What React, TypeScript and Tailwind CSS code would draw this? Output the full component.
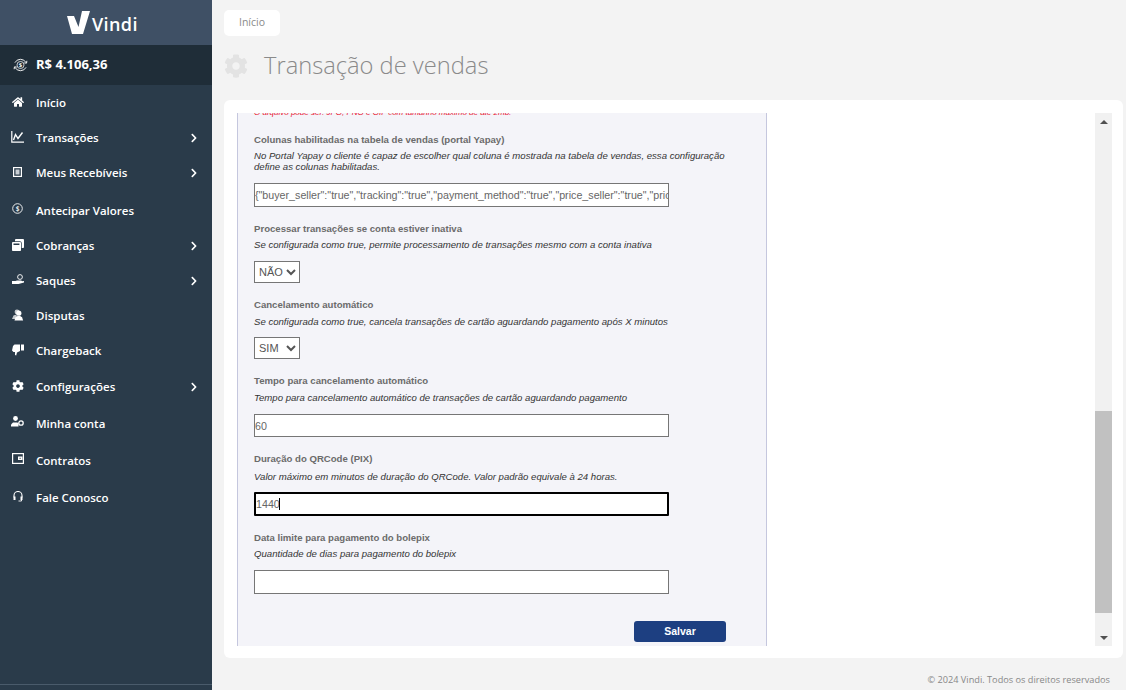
import type { ReactNode } from 'react';
import { FaHome, FaCog, FaChevronRight, FaWindowRestore } from 'react-icons/fa';

const openSans = 'font-["Open_Sans",sans-serif]';

function ChartIcon() {
  return (
    <svg width="13" height="12" viewBox="0 0 13 12" fill="none" stroke="white">
      <path d="M0.8 0v11.2H13" strokeWidth="1.2" />
      <path d="M2.5 9l2-5.5 2.5 4L11.5 1.5" strokeWidth="1.4" />
    </svg>
  );
}

function ReceiptIcon() {
  return (
    <svg width="9" height="10" viewBox="0 0 9 10" fill="none">
      <rect x="0.6" y="0.6" width="7.8" height="8.8" stroke="white" strokeWidth="1.2" />
      <rect x="2.5" y="2.5" width="4" height="5" fill="#c8ced4" />
    </svg>
  );
}

function DollarIcon() {
  return (
    <svg width="11" height="11" viewBox="0 0 11 11" fill="none">
      <circle cx="5.5" cy="5.5" r="4.8" stroke="white" strokeWidth="0.9" />
      <text x="5.5" y="8" textAnchor="middle" fontSize="6.5" fill="white" fontFamily="Open Sans">$</text>
    </svg>
  );
}

function WithdrawIcon() {
  return (
    <svg width="12" height="11" viewBox="0 0 12 11" fill="none">
      <circle cx="8" cy="3" r="2.4" stroke="white" strokeWidth="0.9" />
      <path d="M0 7h3.5l1.5-.6h4.5v1.2H7l5-.6v1.6L6.5 10H0z" fill="white" />
    </svg>
  );
}

function DisputeIcon() {
  return (
    <svg width="12" height="12" viewBox="0 0 12 12" fill="white">
      <circle cx="5" cy="3" r="2.4" opacity="0.75" />
      <path d="M0 10l1.5-3.5 2-.8 1.5 1-1 3.3z" opacity="0.75" />
      <circle cx="6.8" cy="4.2" r="2.6" />
      <path d="M2.5 11.5l1-3.2 2-1.3h2.600l2 1.300 1 3.200z" />
    </svg>
  );
}

function ThumbIcon() {
  return (
    <svg width="12" height="12" viewBox="0 0 12 12" fill="white">
      <path d="M2.5 0.5h5.5v6.5l-3 1.5-.8 3-1.200-.5V8H1.5L0 6.5 1 2z" />
      <rect x="9" y="0.5" width="3" height="6" />
    </svg>
  );
}

function AccountIcon() {
  return (
    <svg width="13" height="11" viewBox="0 0 13 11" fill="white">
      <circle cx="4.5" cy="2.5" r="2.4" />
      <path d="M0 10.5V8.5l2-2h4.500l1 1v3z" />
      <circle cx="10" cy="7" r="2.2" fill="none" stroke="white" strokeWidth="1.3" />
    </svg>
  );
}

function WalletIcon() {
  return (
    <svg width="12" height="11" viewBox="0 0 12 11" fill="none">
      <rect x="0.6" y="0.6" width="10.8" height="9.8" stroke="white" strokeWidth="1.2" />
      <rect x="6" y="3.5" width="4.5" height="3.5" fill="white" />
      <rect x="7.5" y="4.8" width="1.2" height="1" fill="#2a3b4a" />
    </svg>
  );
}

function HeadsetIcon() {
  return (
    <svg width="10" height="11" viewBox="0 0 10 11" fill="none">
      <path d="M1 6.5V4.5a4 4 0 0 1 8 0v2" stroke="white" strokeWidth="1.1" />
      <rect x="0.5" y="5.5" width="2" height="3.5" fill="white" />
      <rect x="7.5" y="5.5" width="2" height="3.5" fill="white" />
      <path d="M8.5 9v1H5.5" stroke="white" strokeWidth="0.9" />
    </svg>
  );
}

function BalanceIcon() {
  return (
    <svg width="17" height="14" viewBox="0 0 18 15" fill="none">
      <path d="M3 5A6.8 6.8 0 0 1 15 5" stroke="white" strokeWidth="1" />
      <path d="M15 10A6.8 6.8 0 0 1 3 10" stroke="white" strokeWidth="1" />
      <path d="M13 5.3l2.5.2.3-2.500M5 9.700L2.500 9.500 2.200 12" stroke="white" strokeWidth="1" />
      <circle cx="9" cy="7.5" r="3.8" stroke="white" strokeWidth="0.8" />
      <text x="9" y="10" textAnchor="middle" fontSize="6.5" fontWeight="700" fill="white" fontFamily="Open Sans">$</text>
    </svg>
  );
}

const menu: { label: string; icon: ReactNode; arrow?: boolean; extra?: string; lift?: string }[] = [
  { label: 'Início', icon: <FaHome size={12} />, lift: 'mb-[1px]' },
  { label: 'Transações', icon: <ChartIcon />, arrow: true },
  { label: 'Meus Recebíveis', icon: <ReceiptIcon />, arrow: true },
  { label: 'Antecipar Valores', icon: <DollarIcon />, extra: 'mt-[3px]', lift: 'mb-[4px]' },
  { label: 'Cobranças', icon: <FaWindowRestore size={12} />, arrow: true, lift: 'mb-[1px]' },
  { label: 'Saques', icon: <WithdrawIcon />, arrow: true },
  { label: 'Disputas', icon: <DisputeIcon /> },
  { label: 'Chargeback', icon: <ThumbIcon /> },
  { label: 'Configurações', icon: <FaCog size={12} />, arrow: true, extra: 'mt-[1px]' },
  { label: 'Minha conta', icon: <AccountIcon />, extra: 'mt-[2px]', lift: 'mb-[4px]' },
  { label: 'Contratos', icon: <WalletIcon />, extra: 'mt-[2px]', lift: 'mb-[4px]' },
  { label: 'Fale Conosco', icon: <HeadsetIcon />, extra: 'mt-[2px]', lift: 'mb-[3px]' },
];

function Sidebar() {
  return (
    <aside className={`flex h-full w-[212px] shrink-0 flex-col bg-[#2a3b4a] text-white ${openSans}`}>
      <div className="flex h-[45px] items-center bg-[#3f5065] pl-[66px]">
        <svg width="24" height="24" viewBox="0 0 24 24">
          <path d="M1 5h7l4.5 11L16 0h8l-7 23H6z" fill="white" />
        </svg>
        <span className="mt-[3px] ml-[2px] text-[18px] leading-none font-semibold tracking-[0.4px]">Vindi</span>
      </div>
      <div className="flex h-[40px] items-center bg-[#1f2d38] pl-[12px] text-[13px] font-bold">
        <BalanceIcon />
        <span className="ml-[7px]">R$ 4.106,36</span>
      </div>
      <nav className="flex flex-col">
        {menu.map((item) => (
          <div key={item.label} className={`flex h-[35px] items-center text-[11.5px] font-semibold ${item.extra ?? ''}`}>
            <span className={`flex w-[36px] justify-center pr-[1px] ${item.lift ?? 'mb-[2px]'}`}>{item.icon}</span>
            <span>{item.label}</span>
            {item.arrow && <FaChevronRight size={10} className="mr-[13px] ml-auto" />}
          </div>
        ))}
      </nav>
      <div className="mt-auto mb-[5px] h-px bg-[#4a5b6b]" />
    </aside>
  );
}

function Field({
  title,
  hint,
  className,
  hintClass,
  children,
}: {
  title: string;
  hint: ReactNode;
  className: string;
  hintClass: string;
  children: ReactNode;
}) {
  return (
    <div className={className}>
      <p className="text-[9.6px] leading-[14px] font-bold text-[#6b6b6b]">{title}</p>
      <p className={`text-[9.6px] leading-[11px] text-[#333333] italic ${hintClass}`}>{hint}</p>
      {children}
    </div>
  );
}

function Form() {
  const inputClass = 'block w-[415px] border border-[#767676] bg-white text-[10.7px] text-[#666666] outline-none';
  const selectClass = 'block h-[22px] w-[46px] rounded-none border border-[#767676] bg-white text-[11px] text-[#555555]';
  return (
    <div className='ml-[13px] h-full w-[530px] shrink-0 border-x border-[#c5c7de] bg-[#f4f4f9] pl-[16px] font-["Liberation_Sans",Arial,sans-serif]'>
      <p className="-mt-[5px] text-[8px] leading-[10px] text-[#e8112d] italic">
        O arquivo pode ser: JPG, PNG e GIF com tamanho máximo de até 2mb.
      </p>
      <Field
        className="mt-[15px]"
        hintClass="mt-[3px]"
        title="Colunas habilitadas na tabela de vendas (portal Yapay)"
        hint={
          <>
            No Portal Yapay o cliente é capaz de escolher qual coluna é mostrada na tabela de vendas, essa configuração
            <br />
            define as colunas habilitadas.
          </>
        }
      >
        <input
          readOnly
          className={`${inputClass} mt-[11px] h-[24px]`}
          value='{"buyer_seller":"true","tracking":"true","payment_method":"true","price_seller":"true","price_original":"true"}'
        />
      </Field>
      <Field
        className="mt-[15px]"
        hintClass="mt-[3px]"
        title="Processar transações se conta estiver inativa"
        hint="Se configurada como true, permite processamento de transações mesmo com a conta inativa"
      >
        <select className={`${selectClass} mt-[11px]`} defaultValue="NÃO">
          <option>NÃO</option>
          <option>SIM</option>
        </select>
      </Field>
      <Field
        className="mt-[15px]"
        hintClass="mt-[4px]"
        title="Cancelamento automático"
        hint="Se configurada como true, cancela transações de cartão aguardando pagamento após X minutos"
      >
        <select className={`${selectClass} mt-[10px]`} defaultValue="SIM">
          <option>NÃO</option>
          <option>SIM</option>
        </select>
      </Field>
      <Field
        className="mt-[15px]"
        hintClass="mt-[4px]"
        title="Tempo para cancelamento automático"
        hint="Tempo para cancelamento automático de transações de cartão aguardando pagamento"
      >
        <input readOnly className={`${inputClass} mt-[11px] h-[23px]`} value="60" />
      </Field>
      <Field
        className="mt-[15px]"
        hintClass="mt-[5px]"
        title="Duração do QRCode (PIX)"
        hint="Valor máximo em minutos de duração do QRCode. Valor padrão equivale à 24 horas."
      >
        <div className="relative mt-[10px] w-[415px]">
          <input readOnly className="block h-[24px] w-[415px] rounded-[1px] border-2 border-black bg-white text-[10.7px] text-[#666666] outline-none" value="1440" />
          <span className="absolute top-[6px] left-[25px] h-[12px] w-px bg-black" />
        </div>
      </Field>
      <Field
        className="mt-[15px]"
        hintClass="mt-[3px]"
        title="Data limite para pagamento do bolepix"
        hint="Quantidade de dias para pagamento do bolepix"
      >
        <input readOnly className={`${inputClass} mt-[11px] h-[24px]`} value="" />
      </Field>
      <div className="mt-[27px] flex w-[472px] justify-end">
        <button className="h-[21px] w-[92px] rounded-[3px] bg-[#1d3f81] text-[10.5px] font-bold text-white">Salvar</button>
      </div>
    </div>
  );
}

function Scrollbar() {
  return (
    <div className="flex h-full w-[17px] shrink-0 flex-col bg-[#f1f1f1]">
      <div className="flex h-[17px] items-center justify-center">
        <span className="h-0 w-0 border-x-[4px] border-b-[4px] border-x-transparent border-b-[#505050]" />
      </div>
      <div className="mt-[281px] h-[202px] bg-[#c1c1c1]" />
      <div className="mt-auto flex h-[17px] items-center justify-center">
        <span className="h-0 w-0 border-x-[4px] border-t-[4px] border-x-transparent border-t-[#505050]" />
      </div>
    </div>
  );
}

export default function App() {
  return (
    <div className="flex h-[690px] w-[1126px] overflow-hidden bg-[#f3f3f3]">
      <Sidebar />
      <main className="flex min-w-0 flex-1 flex-col pr-[3px] pl-[12px]">
        <div className={`mt-[10px] flex h-[26px] w-[56px] items-center justify-center rounded-[5px] bg-white text-[10.5px] text-[#8a8a8a] ${openSans}`}>
          Início
        </div>
        <div className="mt-[13px] flex h-[33px] items-center">
          <FaCog size={24} className="text-[#e3e3e3]" />
          <h1 className={`ml-[16px] text-[23.7px] leading-none font-light text-[#8a8a8a] ${openSans}`}>Transação de vendas</h1>
        </div>
        <section className="mt-[18px] h-[558px] rounded-[6px] bg-white pt-[13px] pb-[12px]">
          <div className="flex h-full overflow-hidden">
            <Form />
            <div className="flex-1" />
            <Scrollbar />
            <div className="w-[11px] shrink-0" />
          </div>
        </section>
        <p className={`mt-[16px] pr-[13px] text-right text-[9.2px] leading-[12px] text-[#888888] ${openSans}`}>
          © 2024 Vindi. Todos os direitos reservados
        </p>
      </main>
    </div>
  );
}
